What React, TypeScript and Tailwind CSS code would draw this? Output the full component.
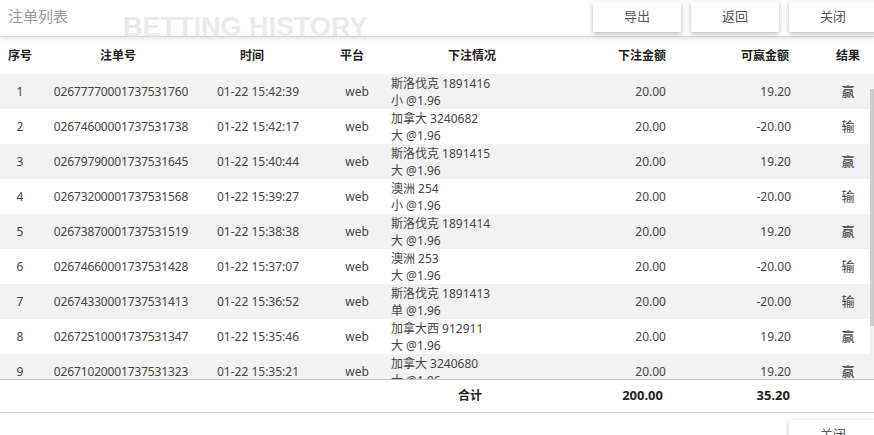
import React from "react"

type Bet = {
  id: number
  no: string
  time: string
  game: string
  pick: string
  stake: string
  win: string
  result: string
}

const bets: Bet[] = [
  { id: 1, no: "02677770001737531760", time: "01-22 15:42:39", game: "斯洛伐克 1891416", pick: "小 @1.96", stake: "20.00", win: "19.20", result: "赢" },
  { id: 2, no: "02674600001737531738", time: "01-22 15:42:17", game: "加拿大 3240682", pick: "大 @1.96", stake: "20.00", win: "-20.00", result: "输" },
  { id: 3, no: "02679790001737531645", time: "01-22 15:40:44", game: "斯洛伐克 1891415", pick: "大 @1.96", stake: "20.00", win: "19.20", result: "赢" },
  { id: 4, no: "02673200001737531568", time: "01-22 15:39:27", game: "澳洲 254", pick: "小 @1.96", stake: "20.00", win: "-20.00", result: "输" },
  { id: 5, no: "02673870001737531519", time: "01-22 15:38:38", game: "斯洛伐克 1891414", pick: "大 @1.96", stake: "20.00", win: "19.20", result: "赢" },
  { id: 6, no: "02674660001737531428", time: "01-22 15:37:07", game: "澳洲 253", pick: "大 @1.96", stake: "20.00", win: "-20.00", result: "输" },
  { id: 7, no: "02674330001737531413", time: "01-22 15:36:52", game: "斯洛伐克 1891413", pick: "单 @1.96", stake: "20.00", win: "-20.00", result: "输" },
  { id: 8, no: "02672510001737531347", time: "01-22 15:35:46", game: "加拿大西 912911", pick: "大 @1.96", stake: "20.00", win: "19.20", result: "赢" },
  { id: 9, no: "02671020001737531323", time: "01-22 15:35:21", game: "加拿大 3240680", pick: "大 @1.96", stake: "20.00", win: "19.20", result: "赢" },
]

function TopButton({ label }: { label: string }) {
  return (
    <button className="w-[88px] h-[30px] bg-white text-[13px] text-[#555] shadow-[0_2px_5px_rgba(0,0,0,0.28)]">
      {label}
    </button>
  )
}

export default function App() {
  return (
    <div
      className="w-[874px] h-[435px] overflow-hidden bg-white text-[12px] text-[#444]"
      style={{ fontFamily: '"Noto Sans", "Noto Sans CJK SC", sans-serif' }}
    >
      {/* title bar */}
      <div className="relative z-10 flex h-[37px] border-b border-[#d6d6d6] bg-white shadow-[0_2px_4px_rgba(0,0,0,0.1)]">
        <div className="pl-[8px] pt-[5px] text-[15px] leading-[22px] text-[#9a9a9a]">注单列表</div>
        <div
          className="ml-[55px] mt-[14px] text-[27px] font-bold leading-none text-[#ebebeb] whitespace-nowrap"
          style={{ fontFamily: '"Liberation Sans", Arial, sans-serif' }}
        >
          BETTING HISTORY
        </div>
        <div className="ml-auto mr-[-3px] flex gap-[10px] pt-[2px]">
          <TopButton label="导出" />
          <TopButton label="返回" />
          <TopButton label="关闭" />
        </div>
      </div>

      {/* column headers */}
      <div className="flex h-[37px] items-center font-bold text-[#222] whitespace-nowrap">
        <div className="w-[40px] text-center">序号</div>
        <div className="w-[156px] text-center">注单号</div>
        <div className="w-[112px] text-center">时间</div>
        <div className="w-[88px] text-center">平台</div>
        <div className="w-[152px] text-center">下注情况</div>
        <div className="w-[118px] text-right">下注金额</div>
        <div className="w-[123px] text-right">可赢金额</div>
        <div className="flex-1 pl-[33px] text-center">结果</div>
      </div>

      {/* rows */}
      <div className="flex h-[306px] border-b border-[#c4c4c4]">
        <div className="w-[870px] overflow-hidden">
          {bets.map((b, i) => (
            <div
              key={b.id}
              className={`flex h-[35px] items-center whitespace-nowrap ${i % 2 === 0 ? "bg-[#f2f2f2]" : "bg-white"}`}
            >
              <div className="w-[40px] text-center">{b.id}</div>
              <div className="w-[162px] text-center tracking-[-0.15px]">{b.no}</div>
              <div className="w-[112px] text-center">{b.time}</div>
              <div className="w-[77px] pl-[9px] text-center">web</div>
              <div className="w-[175px] leading-[17px]">
                <div>{b.game}</div>
                <div>{b.pick}</div>
              </div>
              <div className="w-[100px] text-right">{b.stake}</div>
              <div className="w-[125px] text-right">{b.win}</div>
              <div className="flex-1 pl-[35px] text-center text-[13px]">{b.result}</div>
            </div>
          ))}
        </div>
        <div className="flex-1 bg-[#f1f1f1]">
          <div className="mt-[15px] h-[237px] bg-[#cdcdcd]" />
        </div>
      </div>

      {/* totals */}
      <div className="flex h-[33px] items-center border-b border-[#d0d0d0] text-[13px] font-bold text-[#222] whitespace-nowrap">
        <div className="w-[440px]" />
        <div className="w-[60px] text-center text-[12px]">合计</div>
        <div className="w-[163px] text-right">200.00</div>
        <div className="w-[127px] text-right">35.20</div>
      </div>

      <div className="flex justify-end mr-[-3px] pt-[7px]">
        <TopButton label="关闭" />
      </div>
    </div>
  )
}
